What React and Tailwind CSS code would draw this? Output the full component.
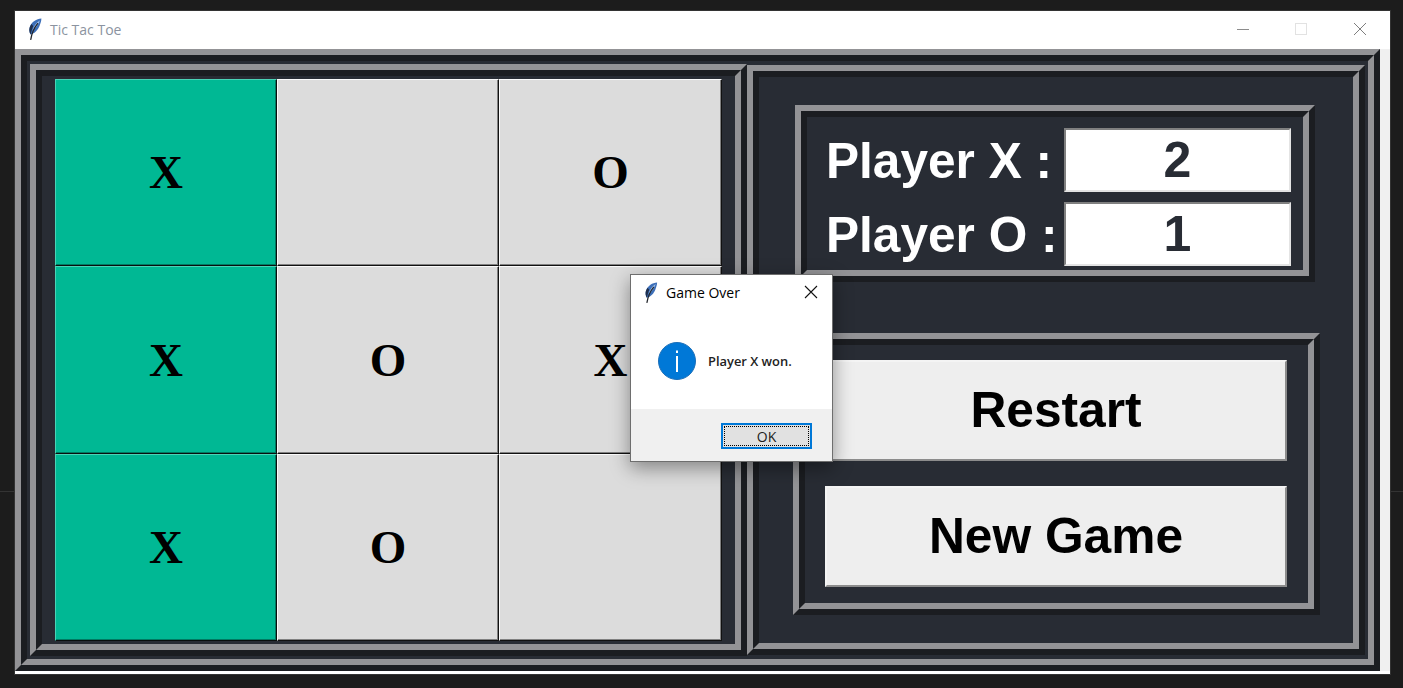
import React from "react";

const UI_FONT = "font-['Open_Sans','Noto_Sans',sans-serif]";
const ARIAL = "font-['Liberation_Sans',Arial,sans-serif]";

function Feather({ className }) {
  return (
    <svg className={className} viewBox="0 0 14 22" fill="none">
      <path d="M13.4 0.6 C8.5 0.8 3.6 4 1.8 9 C1 11.5 1.2 14.2 2.6 16.4 C6.8 15.6 10 12 11.6 7.8 C12.6 5.2 13.4 3 13.4 0.6 Z" fill="#3d6fb8" />
      <path d="M12 2.2 C8.4 4.4 5.8 8 4.4 12.4 C7.4 10.8 10 7 12 2.2 Z" fill="#a4c1e8" />
      <path d="M1.8 9 C1 11.5 1.2 14.2 2.6 16.4 C3.4 13.6 4 11 5.2 8 L3.4 6 Z" fill="#1f2f4d" />
      <path d="M9.6 5.6 C6.4 9.4 4 14 2.8 21.4" stroke="#22262c" strokeWidth="1.3" strokeLinecap="round" />
    </svg>
  );
}

// tk "ridge" relief, two nested bevels with the mitred corners css borders give
function Ridge({ className = "", innerClassName = "", children }) {
  return (
    <div className={`border-[6px] border-t-[#939396] border-l-[#939396] border-r-[#1b1d21] border-b-[#1b1d21] ${className}`}>
      <div className={`h-full border-[6px] border-t-[#1b1d21] border-l-[#1b1d21] border-r-[#939396] border-b-[#939396] bg-[#282c34] ${innerClassName}`}>
        {children}
      </div>
    </div>
  );
}

function Cell({ value, won }) {
  return (
    <div
      className={
        won
          ? "flex items-center justify-center border border-t-[#4ad3b6] border-l-[#4ad3b6] border-r-[#0a0f0e] border-b-[#0a0f0e] bg-[#00b894] shadow-[inset_-1px_-1px_0_#007a62]"
          : "flex items-center justify-center border border-t-[#fafafa] border-l-[#fafafa] border-r-[#111111] border-b-[#111111] bg-[#dcdcdc] shadow-[inset_-1px_-1px_0_#808080]"
      }
    >
      <span className="font-['Liberation_Serif','Times_New_Roman',serif] text-[47px] font-bold leading-none text-black">{value}</span>
    </div>
  );
}

function Score({ label, score }) {
  return (
    <div className="flex h-[64px] items-center">
      <span className={`w-[238px] whitespace-pre pt-[3px] text-[49.6px] font-bold leading-none text-white ${ARIAL}`}>{label}</span>
      <div className={`flex h-full w-[227px] items-center justify-center border-2 border-t-[#808080] border-l-[#808080] border-r-[#e4e4e4] border-b-[#e4e4e4] bg-white text-[50px] font-bold text-[#282c34] ${ARIAL}`}>
        {score}
      </div>
    </div>
  );
}

function GameButton({ label }) {
  return (
    <div className={`flex h-[101px] w-[462px] items-center justify-center border-2 border-t-[#f4f4f4] border-l-[#f4f4f4] border-r-[#8c8c8c] border-b-[#8c8c8c] bg-[#eeeeee] text-[49.7px] font-bold text-black ${ARIAL}`}>
      {label}
    </div>
  );
}

function Dialog() {
  return (
    <div className={`absolute left-[630px] top-[274px] flex h-[188px] w-[203px] flex-col border border-[#6e6e6e] bg-white shadow-[0_6px_18px_rgba(0,0,0,0.4)] ${UI_FONT}`}>
      <div className="flex h-[34px] items-center pl-[13px] pr-[14px]">
        <Feather className="h-[21px] w-[14px]" />
        <span className="ml-[8px] text-[14px] text-black">Game Over</span>
        <svg className="ml-auto h-[14px] w-[14px]" viewBox="0 0 14 14" stroke="#111" strokeWidth="1.1">
          <path d="M1 1 L13 13 M13 1 L1 13" />
        </svg>
      </div>
      <div className="flex flex-1 items-center pl-[27px] pt-[4px]">
        <svg className="h-[38px] w-[38px]" viewBox="0 0 38 38">
          <circle cx="19" cy="19" r="18.5" fill="#0078d7" stroke="#1c6fb8" />
          <rect x="18" y="14" width="2" height="16" fill="#fff" />
          <rect x="18" y="8.5" width="2" height="2.5" fill="#fff" />
        </svg>
        <span className="ml-[12px] mt-[2px] text-[12.9px] font-semibold text-[#222]">Player X won.</span>
      </div>
      <div className="flex h-[52px] items-start justify-end bg-[#f0f0f0] pr-[20px] pt-[14px]">
        <div className="h-[26px] w-[91px] border-2 border-[#0078d7] bg-[#e1e1e1] p-px">
          <div className="flex h-full items-center justify-center border border-dotted border-black pt-[2px] text-[14px] leading-none text-[#222]">OK</div>
        </div>
      </div>
    </div>
  );
}

export default function App() {
  return (
    <div className="relative h-[688px] w-[1403px] overflow-hidden bg-[#1c1c1c] pl-[15px] pt-[11px]">
      {/* faint editor rule showing behind the window */}
      <div className="absolute left-0 top-[491px] h-px w-full bg-[#333333]" />
      <div className="relative flex h-[663px] w-[1375px] flex-col bg-white outline outline-1 outline-[#333333]">
        <div className="flex h-[38px] shrink-0 items-center pb-[2px] pl-[13px]">
          <Feather className="h-[22px] w-[14px]" />
          <span className={`ml-[8px] text-[14px] text-[#8b93a0] ${UI_FONT}`}>Tic Tac Toe</span>
          <div className="ml-auto flex items-center pr-[24px]">
            <svg className="h-[12px] w-[12px]" viewBox="0 0 12 12" stroke="#8c8c8c">
              <path d="M0 6.5 H12" />
            </svg>
            <svg className="ml-[46px] h-[12px] w-[12px]" viewBox="0 0 12 12" fill="none" stroke="#e2e2e2">
              <rect x="0.5" y="0.5" width="11" height="11" />
            </svg>
            <svg className="ml-[47px] h-[12px] w-[12px]" viewBox="0 0 12 12" stroke="#7e7e7e">
              <path d="M0 0 L12 12 M12 0 L0 12" />
            </svg>
          </div>
        </div>

        <div className="flex h-[622px] shrink-0 bg-[#f0f0f0]">
          <Ridge className="w-[1365px]" innerClassName="flex p-[3px]">
            <Ridge className="h-[592px] w-[717px]" innerClassName="pl-[13px] pr-[13px] pt-[3px]">
              <div className="grid h-[562px] grid-cols-[222px_222px_223px] grid-rows-[187px_188px_187px]">
                <Cell value="X" won />
                <Cell value="" />
                <Cell value="O" />
                <Cell value="X" won />
                <Cell value="O" />
                <Cell value="X" />
                <Cell value="X" won />
                <Cell value="O" />
                <Cell value="" />
              </div>
            </Ridge>

            <Ridge className="mt-px h-[590px] w-[618px]" innerClassName="pl-[34px] pt-[28px]">
              <Ridge className="ml-[2px] h-[177px] w-[520px]" innerClassName="flex flex-col gap-[10px] pl-[19px] pt-[11px]">
                <Score label="Player X :" score="2" />
                <Score label="Player O :" score="1" />
              </Ridge>
              <Ridge className="mt-[51px] h-[282px] w-[527px]" innerClassName="flex flex-col gap-[25px] pl-[20px] pt-[15px]">
                <GameButton label="Restart" />
                <GameButton label="New Game" />
              </Ridge>
            </Ridge>
          </Ridge>
        </div>
      </div>
      <Dialog />
    </div>
  );
}
